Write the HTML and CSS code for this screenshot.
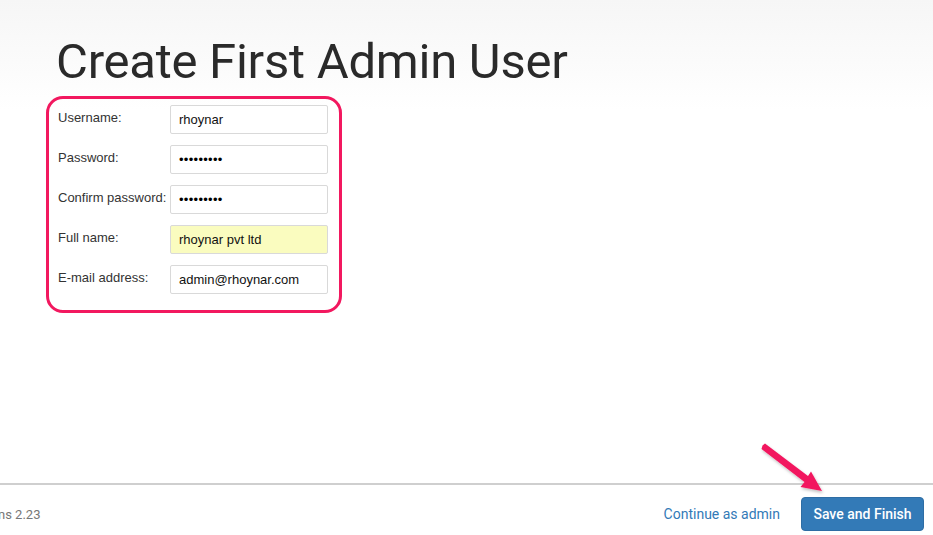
FILE: index.html
```html
<!DOCTYPE html>
<html>
<head>
<meta charset="utf-8">
<link rel="stylesheet" href="styles.css">
</head>
<body>
<div class="page">
  <main class="content">
    <h1 class="title">Create First Admin User</h1>
    <form class="admin-form">
      <div class="row">
        <label class="label">Username:</label>
        <div class="input">rhoynar</div>
      </div>
      <div class="row">
        <label class="label">Password:</label>
        <div class="input dots">•••••••••</div>
      </div>
      <div class="row">
        <label class="label">Confirm password:</label>
        <div class="input dots">•••••••••</div>
      </div>
      <div class="row">
        <label class="label">Full name:</label>
        <div class="input autofill">rhoynar pvt ltd</div>
      </div>
      <div class="row">
        <label class="label">E-mail address:</label>
        <div class="input">admin@rhoynar.com</div>
      </div>
    </form>
  </main>
  <footer class="footer">
    <span class="version">Jenkins 2.23</span>
    <div class="actions">
      <a class="link">Continue as admin</a>
      <button class="btn">Save and Finish</button>
    </div>
  </footer>
  <svg class="arrow" width="933" height="535" viewBox="0 0 933 535">
    <defs>
      <filter id="sh" x="-20%" y="-20%" width="140%" height="140%">
        <feDropShadow dx="1" dy="2" stdDeviation="1.5" flood-color="#000" flood-opacity="0.25"/>
      </filter>
    </defs>
    <g filter="url(#sh)" fill="#f2185f" stroke="none">
      <path d="M762.5 445.5 L765 443.5 L808 476 L811 471.5 L822 491 L800.5 487 L804.5 482 L761.5 449 Z"/>
    </g>
  </svg>
</div>
</body>
</html>
```
FILE: styles.css
```css
* { box-sizing: border-box; }
html, body { margin: 0; padding: 0; }
body {
  background: #fff;
  font-family: "Liberation Sans", Arial, sans-serif;
  color: #333;
}
.page {
  position: relative;
  width: 933px;
  height: 535px;
  overflow: hidden;
  display: flex;
  flex-direction: column;
  background: linear-gradient(to bottom, #f6f6f6 0px, #ffffff 110px);
}
.content {
  flex: 1;
  padding-top: 34px;
}
.title {
  margin: 0 0 6px 56px;
  font-family: Roboto, "Liberation Sans", sans-serif;
  font-weight: 400;
  font-size: 49px;
  line-height: 56px;
  color: #2a2a2a;
  letter-spacing: -0.25px;
}
.admin-form {
  margin-left: 46px;
  width: 296px;
  border: 3.5px solid #f2185f;
  border-radius: 17px;
  padding: 6px 10px 16px 9px;
  display: flex;
  flex-direction: column;
  gap: 11px;
}
.row {
  display: grid;
  grid-template-columns: 112px 158px;
  align-items: start;
}
.label {
  font-size: 13px;
  line-height: 16px;
  padding-top: 5px;
  color: #333;
  white-space: nowrap;
}
.input {
  height: 29px;
  border: 1px solid #d9d9d9;
  border-radius: 2px;
  background: #fff;
  padding: 0 8px;
  font-size: 13px;
  line-height: 27px;
  color: #111;
}
.input.dots {
  font-size: 13px;
  letter-spacing: 0.3px;
  color: #000;
}
.input.autofill {
  background: #fafcbf;
}
.footer {
  height: 52px;
  border-top: 2px solid #cfcfcf;
  display: flex;
  align-items: flex-start;
  justify-content: space-between;
  padding: 12px 9px 0 0;
  font-family: Roboto, "Liberation Sans", sans-serif;
}
.version {
  margin-left: -33px;
  font-size: 13px;
  color: #777;
  padding-top: 10px;
}
.actions {
  display: flex;
  align-items: center;
  gap: 21px;
}
.link {
  color: #337ab7;
  font-size: 14px;
  text-decoration: none;
}
.btn {
  height: 34px;
  width: 123px;
  border: 1px solid #2e6da4;
  border-radius: 4px;
  background: #337ab7;
  color: #fff;
  font-family: Roboto, "Liberation Sans", sans-serif;
  font-size: 14px;
  font-weight: 500;
  padding: 0;
}
.arrow {
  position: absolute;
  left: 0;
  top: 0;
  pointer-events: none;
}
```
